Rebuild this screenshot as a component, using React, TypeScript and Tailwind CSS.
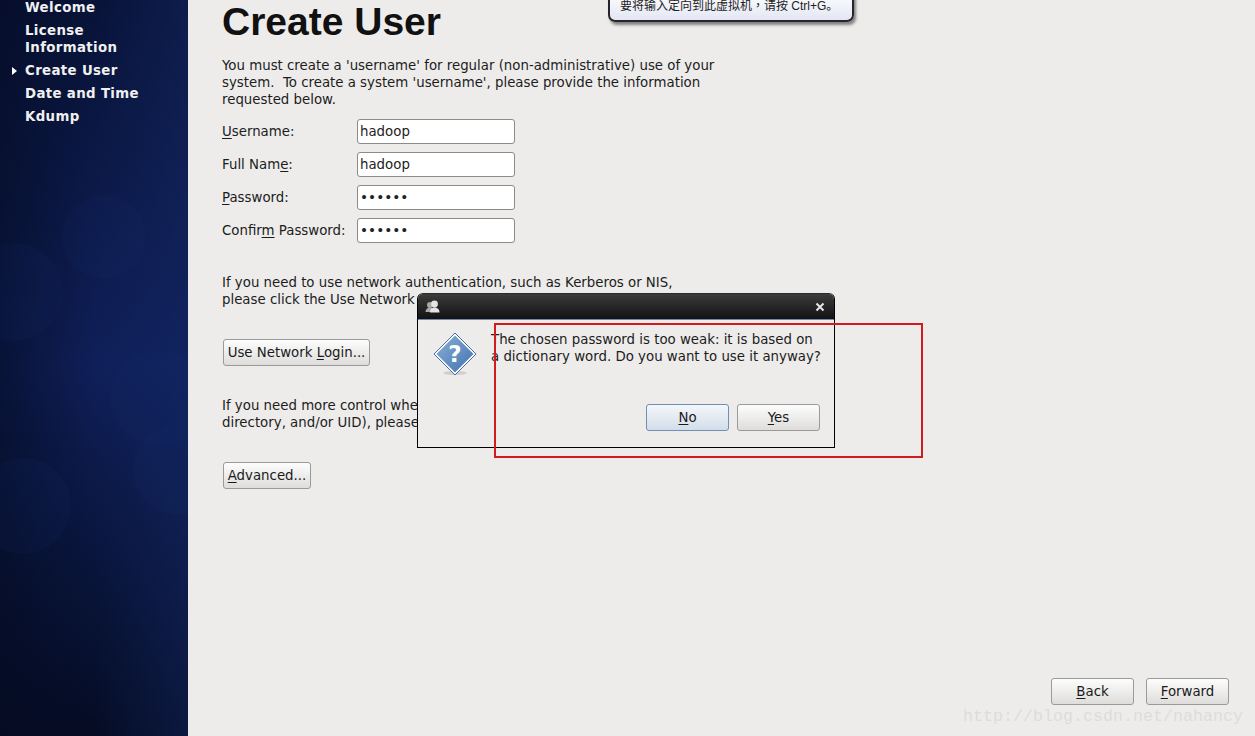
import React from "react";

const font = "font-['DejaVu_Sans',sans-serif]";

function Btn({ className, children, focused }: { className: string; children: React.ReactNode; focused?: boolean }) {
  return (
    <div
      className={`flex items-center justify-center rounded-[3px] border text-[13.33px] text-[#1a1a1a] ${
        focused
          ? "border-[#6f8fb5] bg-gradient-to-b from-[#f4f7fa] to-[#d3dde9]"
          : "border-[#9a9a98] bg-gradient-to-b from-[#fdfdfd] to-[#dedddb]"
      } ${className}`}
    >
      <span>{children}</span>
    </div>
  );
}

function Field({ label, value, secret }: { label: React.ReactNode; value: string; secret?: boolean }) {
  return (
    <div className="flex h-[25px] items-center">
      <div className="w-[135px]">{label}</div>
      <div className="flex h-[25px] w-[158px] items-center rounded-[3px] border border-[#8b8b89] bg-white pl-[2px] text-[#222]">
        {secret ? <span className="text-[13.7px]">••••••</span> : value}
      </div>
    </div>
  );
}

const U = ({ children }: { children: string }) => <span className="underline underline-offset-2">{children}</span>;

function Blob({ className }: { className: string }) {
  return <div className={`absolute rounded-full bg-[#1b2f6a] opacity-[0.13] ${className}`} />;
}

export default function App() {
  return (
    <div className={`relative flex h-[736px] w-[1255px] overflow-hidden bg-[#edeceb] text-[13.33px] leading-[17px] text-[#1c1c1c] ${font}`}>
      <aside className="relative w-[188px] shrink-0 overflow-hidden bg-gradient-to-b from-[#081338] via-[#0f1f58] to-[#050c24]">
        <div className="absolute inset-0 bg-gradient-to-r from-[#040a2090] via-transparent to-[#162c6c60]" />
        <Blob className="left-[62px] top-[195px] h-[84px] w-[84px]" />
        <Blob className="left-[-35px] top-[243px] h-[98px] w-[98px]" />
        <Blob className="left-[110px] top-[350px] h-[96px] w-[96px]" />
        <Blob className="left-[133px] top-[425px] h-[90px] w-[90px]" />
        <Blob className="left-[-25px] top-[458px] h-[96px] w-[96px]" />
        <nav className="relative flex flex-col gap-[6px] pl-[25px] text-[13.33px] font-bold leading-[17px] tracking-[0.35px] text-[#f0f0f0]">
          <div className="-mt-[1px]">Welcome</div>
          <div>
            License
            <br />
            Information
          </div>
          <div className="relative">
            <span className="absolute left-[-13px] top-[5px] h-0 w-0 border-y-[4px] border-l-[5px] border-y-transparent border-l-white" />
            Create User
          </div>
          <div>Date and Time</div>
          <div>Kdump</div>
        </nav>
      </aside>

      <main className="flex-1 pl-[34px]">
        <h1 className="-mt-[1px] font-['Liberation_Sans',sans-serif] text-[39px] font-bold leading-[46px] text-[#111]">Create User</h1>
        <p className="mt-[12px] w-[520px]">
          You must create a 'username' for regular (non-administrative) use of your
          <br />
          system.&nbsp; To create a system 'username', please provide the information
          <br />
          requested below.
        </p>
        <div className="mt-[11px] flex flex-col gap-[8px]">
          <Field label={<><U>U</U>sername:</>} value="hadoop" />
          <Field label={<>Full Nam<U>e</U>:</>} value="hadoop" />
          <Field label={<><U>P</U>assword:</>} value="" secret />
          <Field label={<>Confir<U>m</U> Password:</>} value="" secret />
        </div>
        <p className="mt-[31px] w-[520px]">
          If you need to use network authentication, such as Kerberos or NIS,
          <br />
          please click the Use Network Login button.
        </p>
        <Btn className="ml-[1px] mt-[31px] h-[27px] w-[147px]">
          Use Network <U>L</U>ogin...
        </Btn>
        <p className="mt-[31px] w-[560px]">
          If you need more control when creating the user (specifying home
          <br />
          directory, and/or UID), please click the Advanced button.
        </p>
        <Btn className="ml-[1px] mt-[31px] h-[27px] w-[88px]">
          <U>A</U>dvanced...
        </Btn>
      </main>

      {/* VM hint tooltip */}
      <div className="absolute left-[608px] top-[-10px] flex h-[32px] w-[246px] items-end rounded-b-[7px] border-2 border-[#26262a] bg-gradient-to-b from-[#ffffff] to-[#e3e6f4] pb-[7px] pl-[10px] font-['Liberation_Sans','Noto_Sans_CJK_SC',sans-serif] text-[12px] leading-[14px] text-[#222] shadow-[2px_3px_3px_rgba(0,0,0,0.45)]">
        <span>
          要将输入定向到此虚拟机<span className="font-['Noto_Sans_CJK_TC',sans-serif]">，</span>请按 Ctrl+G。
        </span>
      </div>

      {/* Dialog */}
      <div className="absolute left-[417px] top-[293px] flex h-[155px] w-[418px] flex-col overflow-hidden rounded-t-[6px] border border-black border-t-[#2a2a2a] bg-[#edeceb]">
        <div className="flex h-[25px] shrink-0 items-center justify-between bg-gradient-to-b from-[#3c3c3c] to-[#131313] pl-[7px] pr-[9px]">
          <svg width="16" height="15" viewBox="0 0 16 15">
            <circle cx="5" cy="6" r="3" fill="#a8a8a8" />
            <path d="M0.5 13c0-3 2-4.5 4.5-4.5S9 10 9 13z" fill="#a8a8a8" />
            <circle cx="9.5" cy="5" r="3.4" fill="#e4e4e4" />
            <path d="M5 13.5c0-3.6 2-5 4.5-5s5 1.4 5 5z" fill="#e4e4e4" />
          </svg>
          <svg width="10" height="10" viewBox="0 0 10 10">
            <path d="M1.5 1.5l7 7M8.5 1.5l-7 7" stroke="#e6e6e6" strokeWidth="2" />
          </svg>
        </div>
        <div className="h-px shrink-0 bg-[#6d87a8]" />
        <div className="flex flex-1 flex-col">
          <div className="flex pl-[15px] pt-[12px]">
            <svg width="44" height="44" viewBox="0 0 44 44" className="shrink-0">
              <defs>
                <linearGradient id="q" x1="0" y1="0" x2="1" y2="1">
                  <stop offset="0" stopColor="#8db0d8" />
                  <stop offset="1" stopColor="#3f72ae" />
                </linearGradient>
              </defs>
              <ellipse cx="22" cy="41" rx="12" ry="2" fill="#000" opacity="0.12" />
              <path d="M22 2.5L41.5 22 22 41.5 2.5 22z" fill="url(#q)" stroke="#ffffff" strokeWidth="1.4" strokeLinejoin="round" />
              <path d="M22 1L43 22 22 43 1 22z" fill="none" stroke="#466f9f" strokeWidth="1" strokeLinejoin="round" />
              <text x="22" y="30" textAnchor="middle" fontSize="23" fontWeight="700" fill="#fff" fontFamily="DejaVu Sans">?</text>
            </svg>
            <p className="-mt-[1px] ml-[14px] whitespace-nowrap text-[#1c1c1c]">
              The chosen password is too weak: it is based on
              <br />
              a dictionary word. Do you want to use it anyway?
            </p>
          </div>
          <div className="mt-[28px] flex justify-end gap-[8px] pr-[14px]">
            <Btn focused className="h-[27px] w-[83px]"><U>N</U>o</Btn>
            <Btn className="h-[27px] w-[83px]"><U>Y</U>es</Btn>
          </div>
        </div>
      </div>

      {/* Red annotation */}
      <div className="pointer-events-none absolute left-[494px] top-[323px] h-[135px] w-[429px] border-2 border-[#d01c1f]" />

      {/* Footer buttons */}
      <div className="absolute bottom-[31px] right-[26px] flex gap-[12px]">
        <Btn className="h-[27px] w-[83px]"><U>B</U>ack</Btn>
        <Btn className="h-[27px] w-[83px]"><U>F</U>orward</Btn>
      </div>

      {/* Watermark */}
      <div className="absolute left-[963px] top-[707px] font-['Liberation_Mono',monospace] text-[16.67px] leading-[20px] text-[#dddcdb]">
        http://blog.csdn.net/nahancy
      </div>
    </div>
  );
}
